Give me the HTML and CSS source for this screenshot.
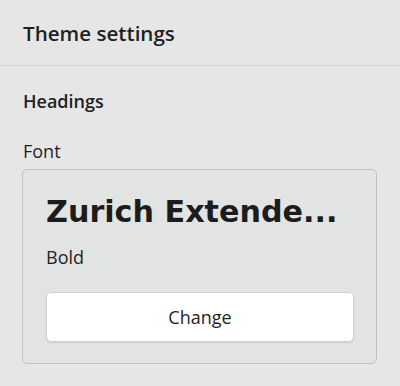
FILE: index.html
```html
<!DOCTYPE html>
<html lang="en">
<head>
    <meta charset="UTF-8">
    <meta name="viewport" content="width=device-width, initial-scale=1.0">
    <title>Theme settings</title>
    <link rel="stylesheet" href="styles.css">
</head>
<body>
    <div class="panel">
        <div class="panel-header">
            <h2>Theme settings</h2>
        </div>
        <div class="panel-body">
            <h3>Headings</h3>
            <div class="field">
                <label>Font</label>
                <div class="font-card">
                    <div class="font-name">Zurich Extende...</div>
                    <div class="font-style">Bold</div>
                    <button class="btn">Change</button>
                </div>
            </div>
        </div>
    </div>
</body>
</html>
```

FILE: styles.css
```css
* { box-sizing: border-box; }
body { margin: 0; font-family: 'Open Sans', 'Noto Sans', sans-serif; background: #e6e6e6; color: #1f1f1f; }
.panel { width: 400px; height: 386px; }
.panel-header { height: 66px; padding: 0 23px; display: flex; align-items: center; border-bottom: 1px solid #d2d2d2; }
.panel-header h2 { margin: 0; font-size: 20.6px; font-weight: 600; }
.panel-body { padding: 22px 23px 0 22px; }
.panel-body h3 { margin: 0 0 26px 1px; font-size: 18px; font-weight: 600; line-height: 26px; }
.field label { display: block; margin-left: 1px; font-size: 18px; line-height: 22px; margin-bottom: 7px; }
.font-card { width: 355px; background: #e2e3e3; border: 1px solid #c2c2c2; border-radius: 5px; padding: 22px 22px 21px 23px; }
.font-name { font-family: 'DejaVu Sans', sans-serif; font-weight: bold; font-size: 30.2px; line-height: 40px; color: #1c1c1c; white-space: nowrap; }
.font-style { font-size: 18px; line-height: 22px; margin-top: 14px; }
.btn { display: block; width: 308px; height: 50px; margin-top: 24px; background: #fff; border: 1px solid #cfcfcf; border-radius: 5px; box-shadow: 0 1px 1px rgba(0,0,0,0.08); font-family: inherit; font-size: 18px; color: #1f1f1f; }
```
